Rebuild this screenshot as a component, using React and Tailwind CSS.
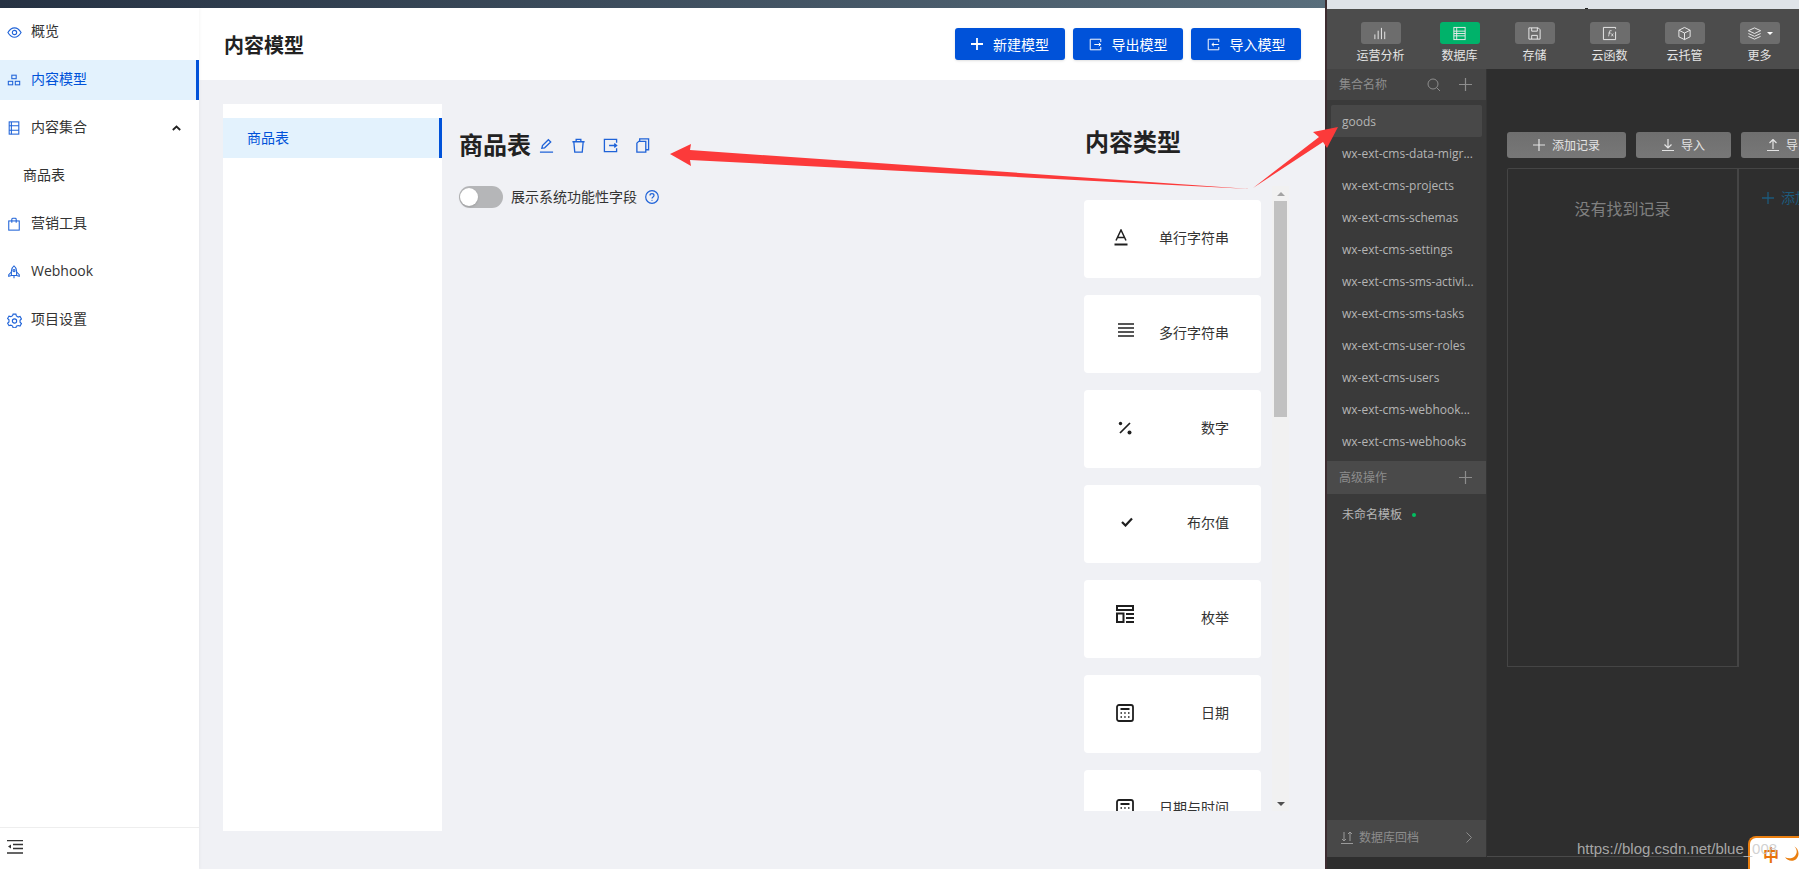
import React from "react";

const font = { fontFamily: '"Open Sans","Noto Sans CJK SC",sans-serif' };

function Svg({ s = 14, v = 16, sw = 1.2, children, className = "" }) {
  return (
    <svg width={s} height={s} viewBox={`0 0 ${v} ${v}`} fill="none" stroke="currentColor" strokeWidth={sw} className={"shrink-0 " + className}>
      {children}
    </svg>
  );
}

const EyeI = () => (
  <Svg s={15}>
    <path d="M1 8c2-3.400 4.300-5 7-5s5 1.600 7 5c-2 3.400-4.300 5-7 5s-5-1.600-7-5z" />
    <circle cx="8" cy="8" r="2.300" />
  </Svg>
);
const ModelI = () => (
  <Svg>
    <rect x="5.500" y="2.500" width="5" height="4" />
    <rect x="1.500" y="9.500" width="5" height="4" />
    <rect x="9.500" y="9.500" width="5" height="4" />
  </Svg>
);
const SetI = () => (
  <Svg>
    <rect x="2.500" y="1" width="11" height="14" />
    <path d="M2.500 5.500h11M2.500 10.500h11M5 1v14" />
  </Svg>
);
const BagI = () => (
  <Svg>
    <rect x="2" y="4.500" width="12" height="10.500" />
    <path d="M5.500 6.500V2.500a1 1 0 0 1 1-1h3a1 1 0 0 1 1 1v4" />
  </Svg>
);
const RocketI = () => (
  <Svg>
    <path d="M8 1c2 1.500 3 3.500 3 6v5H5V7c0-2.500 1-4.500 3-6z" />
    <path d="M5 8l-3 3v2l3-1M11 8l3 3v2l-3-1M8 12v3" />
    <circle cx="8" cy="6.500" r="1.200" />
  </Svg>
);
const GearI = () => (
  <Svg s={15}>
    <path d="M6.500 1.200h3l.5 2 1.900 1.100 2-.6 1.500 2.600-1.500 1.400v2.200l1.500 1.400-1.500 2.600-2-.6L10 14l-.5 1.800h-3L6 14l-1.900-1.100-2 .6L.6 10.900l1.500-1.400V7.300L.6 5.900l1.500-2.600 2 .6L6 2.800z" />
    <circle cx="8" cy="8.500" r="2.300" />
  </Svg>
);
const ExportI = ({ s = 14, sw = 1.2 }) => (
  <Svg s={s} sw={sw}>
    <path d="M14.500 5V1.500h-13v13h13V11" />
    <path d="M6.500 8h8M12 6l2.500 2-2.500 2" />
  </Svg>
);
const ImportI = ({ s = 14 }) => (
  <Svg s={s}>
    <path d="M14.500 5V1.500h-13v13h13V11" />
    <path d="M6 8h8.500M8.500 6L6 8l2.500 2" />
  </Svg>
);

function NavItem({ icon, label, active, right, sub }) {
  return (
    <div className="h-12 flex items-center">
      <div className={`h-10 w-full flex items-center text-[14px] ${active ? "bg-[#e3f2fd] border-r-[3px] border-[#0052d9] text-[#0052d9]" : "text-[#333333]"} ${sub ? "pl-[23px]" : "pl-[7px]"}`}>
        {icon && <span className="w-[24px] text-[#1f63d8]">{icon}</span>}
        <span className="mb-[3px]">{label}</span>
        {right}
      </div>
    </div>
  );
}

function BlueBtn({ icon, label }) {
  return (
    <button className="w-[110px] h-8 rounded-[3px] bg-[#0052d9] text-white text-[14px] flex items-center justify-center gap-[10px] shadow-sm">
      {icon}
      <span>{label}</span>
    </button>
  );
}

const LinesI = () => (
  <svg width="17" height="15" viewBox="0 0 17 15" stroke="#1f1f1f" strokeWidth="1.700" className="ml-[2px] mt-[-8px]">
    <path d="M0 1h16M0 5h16M0 9h16M0 13h16" />
  </svg>
);
const AI = () => (
  <svg width="14" height="18" viewBox="0 0 14 18" fill="none" stroke="#1f1f1f" strokeWidth="1.500" className="mt-[-3px] ml-[-2px]">
    <path d="M2 11.500L7 1l5 10.500M3.500 8.500h7" />
    <path d="M0.500 15.500h13" strokeWidth="2" />
  </svg>
);
const PctI = () => (
  <svg width="14" height="14" viewBox="0 0 14 14" stroke="#1f1f1f" strokeWidth="1.700" className="ml-[2px] mt-[-2px]">
    <path d="M2 12L12 2" />
    <circle cx="2.500" cy="2.500" r="1.700" fill="#1f1f1f" stroke="none" />
    <circle cx="11.500" cy="11.500" r="2" fill="#1f1f1f" stroke="none" />
  </svg>
);
const CheckI = () => (
  <svg width="12" height="10" viewBox="0 0 12 10" fill="none" stroke="#1f1f1f" strokeWidth="2.200" className="ml-[5px] mt-[-5px]">
    <path d="M1 5l3.500 3.500L11 1.500" />
  </svg>
);
const EnumI = () => (
  <svg width="18" height="18" viewBox="0 0 18 18" fill="none" stroke="#1f1f1f" strokeWidth="2" className="mt-[-10px]">
    <path d="M1 1h16v4H1zM1 8.500h6.500V17H1zM10 9h8M10 13h8M10 17h8" />
  </svg>
);
const CalI = () => (
  <svg width="18" height="18" viewBox="0 0 18 18" fill="none" stroke="#1f1f1f" strokeWidth="1.800" className="mt-[-2px]">
    <rect x="1" y="1" width="16" height="16" rx="2" />
    <path d="M4.500 5h9" strokeWidth="2" />
    <path d="M4.500 9h1.500M8.200 9h1.500M12 9h1.500M4.500 13h1.500M8.200 13h1.500M12 13h1.500" strokeWidth="1.700" />
  </svg>
);

const types = [
  [<AI />, "单行字符串"],
  [<LinesI />, "多行字符串"],
  [<PctI />, "数字"],
  [<CheckI />, "布尔值"],
  [<EnumI />, "枚举"],
  [<CalI />, "日期"],
  [<CalI />, "日期与时间"],
];

const tabs = [
  ["运营分析", <path key="a" d="M2 14V9M5.500 14V5M9 14V2M12.500 14V6" />, false],
  ["数据库", <g key="b"><rect x="2" y="1.500" width="12" height="13" /><path d="M2 5.500h12M2 8h12M2 10.500h12M5 1.500v13" /></g>, true],
  ["存储", <g key="c"><path d="M2 2h10l2 2v10H2z" /><path d="M5 2v3.500h6V2M5 14v-4h6v4" /></g>, false],
  ["云函数", <g key="d"><path d="M14.500 3V1.500h-13v13h13V6" /><path d="M7 11l1.300-6h2M6.800 7.500h2.500M10 8l2 3M12 8l-2 3" strokeWidth=".8" /></g>, false],
  ["云托管", <g key="e"><path d="M8 1.500l6 3v7l-6 3-6-3v-7z" /><path d="M2 4.500l6 3 6-3M8 7.500v7" /></g>, false],
];

const cols = ["wx-ext-cms-data-migr...", "wx-ext-cms-projects", "wx-ext-cms-schemas", "wx-ext-cms-settings", "wx-ext-cms-sms-activi...", "wx-ext-cms-sms-tasks", "wx-ext-cms-user-roles", "wx-ext-cms-users", "wx-ext-cms-webhook...", "wx-ext-cms-webhooks"];

function DarkBtn({ w, icon, label }) {
  return (
    <button className={`${w} h-[26px] shrink-0 rounded-[3px] bg-gradient-to-b from-[#6f6f6f] to-[#777777] text-[#e4e4e4] text-[12px] flex items-center justify-center gap-[7px]`}>
      {icon}
      <span className="pt-[1px]">{label}</span>
    </button>
  );
}

export default function App() {
  return (
    <div className="relative w-[1799px] h-[869px] overflow-hidden flex bg-[#f0f1f5]" style={font}>
      {/* left window */}
      <div className="w-[1325px] h-full flex flex-col shrink-0">
        <div className="h-2 bg-gradient-to-r from-[#263243] to-[#596e7c]" />
        <div className="flex-1 flex min-h-0">
          <aside className="w-[199px] bg-white flex flex-col shrink-0 shadow-[1px_0_3px_rgba(0,0,0,0.04)] z-10">
            <div className="flex-1">
              <NavItem icon={<EyeI />} label="概览" />
              <NavItem icon={<ModelI />} label="内容模型" active />
              <NavItem
                icon={<SetI />}
                label="内容集合"
                right={
                  <svg width="9" height="6" viewBox="0 0 9 6" fill="none" stroke="#222" strokeWidth="1.800" className="ml-[85px]">
                    <path d="M.8 5l3.700-3.500L8.200 5" />
                  </svg>
                }
              />
              <NavItem label="商品表" sub />
              <NavItem icon={<BagI />} label="营销工具" />
              <NavItem icon={<RocketI />} label="Webhook" />
              <NavItem icon={<GearI />} label="项目设置" />
            </div>
            <div className="h-[42px] border-t border-[#eeeeee] pl-[7px] pt-[12px]">
              <svg width="16" height="14" viewBox="0 0 16 14" fill="none" stroke="#333" strokeWidth="1.300">
                <path d="M0 .7h16M6 4.500h10M6 8.500h10M0 13h16" />
                <path d="M4 4.500v4L1 6.500z" fill="#333" stroke="none" />
              </svg>
            </div>
          </aside>
          <div className="flex-1 flex flex-col min-w-0">
            <header className="h-[72px] bg-white flex items-center justify-between pl-[25px] pr-6 shrink-0">
              <h1 className="text-[20px] font-bold text-[#222222] pt-[3px]">内容模型</h1>
              <div className="flex gap-2">
                <BlueBtn
                  icon={
                    <svg width="12" height="12" viewBox="0 0 12 12" stroke="white" strokeWidth="1.800">
                      <path d="M6 0v12M0 6h12" />
                    </svg>
                  }
                  label="新建模型"
                />
                <BlueBtn icon={<ExportI s={13} />} label="导出模型" />
                <BlueBtn icon={<ImportI s={13} />} label="导入模型" />
              </div>
            </header>
            <main className="flex-1 flex pl-6 pt-6 min-h-0">
              <div className="w-[219px] h-[727px] bg-white pt-[14px] shrink-0">
                <div className="h-10 bg-[#e3f2fd] border-r-[3px] border-[#0052d9] flex items-center pl-6 pb-[2px] text-[14px] text-[#0052d9]">商品表</div>
              </div>
              <div className="w-[642px] pl-[17px] pt-[25px] shrink-0">
                <div className="h-8 flex items-center text-[#1f63d8]">
                  <h2 className="text-[24px] font-bold text-[#222222] w-[80px]">商品表</h2>
                  <div className="flex gap-[17px] items-center">
                    <Svg s={15} sw={1.400}>
                      <path d="M3 11l.7-3L10 1.800 12.500 4.300 6 10.500zM1 15h14" />
                    </Svg>
                    <Svg s={15} sw={1.400}>
                      <path d="M1.500 4h13M5.500 3.500V1.500h5v2M3 4l1 11h8l1-11" />
                    </Svg>
                    <ExportI s={15} sw={1.400} />
                    <Svg s={15} sw={1.400}>
                      <path d="M5 3.500V1h9.500v11.500H12M2 5.500L4 3.500h7.500V15H2z" />
                    </Svg>
                  </div>
                </div>
                <div className="mt-[25px] h-[22px] flex items-center text-[14px] text-[#333333]">
                  <span className="w-11 h-[22px] rounded-full bg-[#b5b6b8] relative shrink-0">
                    <span className="absolute left-[1px] top-[2px] w-[18px] h-[18px] rounded-full bg-white shadow" />
                  </span>
                  <span className="ml-2 mb-[2px]">展示系统功能性字段</span>
                  <span className="ml-2 text-[#1f63d8]">
                    <svg width="14" height="14" viewBox="0 0 14 14" fill="none" stroke="currentColor" strokeWidth="1.200">
                      <circle cx="7" cy="7" r="6.300" />
                      <path d="M5 5.500C5 4.300 6 3.700 7 3.700s2 .7 2 1.800c0 1.500-2 1.500-2 3" />
                      <circle cx="7" cy="10.300" r=".6" fill="currentColor" stroke="none" />
                    </svg>
                  </span>
                </div>
              </div>
              <div className="w-[205px] shrink-0 pt-[22px]">
                <h2 className="h-8 text-[24px] leading-8 font-bold text-[#222222] pl-[1px]">内容类型</h2>
                <div className="mt-[28px] h-[625px] flex">
                  <div className="w-[177px] h-full overflow-hidden pt-[14px] flex flex-col gap-[17px] shrink-0">
                    {types.map(([ic, t], i) => (
                      <div key={i} className="h-[78px] shrink-0 bg-white rounded-[4px] flex items-center justify-between pl-[32px] pr-[32px]">
                        <div className="w-[20px] flex">{ic}</div>
                        <span className="text-[14px] text-[#333333] mb-[3px]">{t}</span>
                      </div>
                    ))}
                  </div>
                  <div className="ml-[11px] w-[17px] h-full bg-[#f1f1f1] flex flex-col items-center">
                    <div className="mt-[6px] w-0 h-0 border-x-[4px] border-x-transparent border-b-[4px] border-b-[#a3a3a3]" />
                    <div className="mt-[5px] w-[13px] h-[216px] bg-[#c1c1c1]" />
                    <div className="mt-auto mb-[5px] w-0 h-0 border-x-[4px] border-x-transparent border-t-[4px] border-t-[#505050]" />
                  </div>
                </div>
              </div>
            </main>
          </div>
        </div>
      </div>

      {/* devtools window */}
      <div className="flex-1 h-full flex flex-col border-l-2 border-[#3d2c30] bg-[#2e2e2e] min-w-0">
        <div className="h-[9px] bg-[#dfe3e8] shrink-0 pl-[258px]">
          <div className="w-[3px] h-[1px] mt-[8px] bg-[#222]" />
        </div>
        <div className="h-[60px] bg-[#4c4c4c] flex pl-[16px] pt-[13px] shrink-0">
          {tabs.map(([label, path, act], i) => (
            <div key={label} className={`w-[75px] flex flex-col items-center ${i === 1 ? "ml-[4px]" : ""}`}>
              <div className={`w-10 h-[22px] rounded-[3px] flex items-center justify-center text-[#ededed] ${act ? "bg-[#00b26a]" : "bg-[#6d6d6d]"}`}>
                <Svg s={15} sw={1}>{path}</Svg>
              </div>
              <span className="mt-[4px] text-[12px] leading-4 text-[#e4e4e4]">{label}</span>
            </div>
          ))}
          <div className="w-[75px] flex flex-col items-center">
            <div className="w-10 h-[22px] rounded-[3px] bg-[#6d6d6d] flex items-center justify-center gap-[5px] text-[#ededed]">
              <Svg s={15} sw={1}>
                <path d="M8 2l6.500 3L8 8 1.500 5zM1.500 8L8 11l6.500-3M1.500 11L8 14l6.500-3" />
              </Svg>
              <span className="w-0 h-0 border-x-[3px] border-x-transparent border-t-[3px] border-t-white" />
            </div>
            <span className="mt-[4px] text-[12px] leading-4 text-[#e4e4e4]">更多</span>
          </div>
        </div>
        <div className="h-[788px] flex shrink-0">
          <div className="w-[160px] h-full bg-[#3a3a3a] flex flex-col border-r border-[#343434] shrink-0">
            <div className="h-[31px] bg-[#444444] flex items-center pl-[12px] pr-[14px] text-[12px] text-[#8d8d8d] shrink-0">
              <span className="flex-1 pt-[1px]">集合名称</span>
              <svg width="14" height="14" viewBox="0 0 14 14" fill="none" stroke="#8d8d8d" strokeWidth="1">
                <circle cx="6" cy="6" r="5" />
                <path d="M9.500 9.500l3.500 3.500" />
              </svg>
              <svg width="13" height="13" viewBox="0 0 13 13" stroke="#8d8d8d" strokeWidth="1.200" className="ml-[18px]">
                <path d="M6.500 0v13M0 6.500h13" />
              </svg>
            </div>
            <div className="pt-[5px] px-1 text-[12px] text-[#b5b5b5] shrink-0">
              <div className="h-8 bg-[#484848] rounded-[2px] flex items-center pl-[11px] pt-[1px]">goods</div>
              {cols.map((c) => (
                <div key={c} className="h-8 flex items-center pl-[11px] pt-[1px] whitespace-nowrap">{c}</div>
              ))}
            </div>
            <div className="mt-1 h-[33px] bg-[#4a4a4a] flex items-center pl-[12px] pr-[14px] text-[12px] text-[#8d8d8d] shrink-0">
              <span className="flex-1">高级操作</span>
              <svg width="13" height="13" viewBox="0 0 13 13" stroke="#8d8d8d" strokeWidth="1.200">
                <path d="M6.500 0v13M0 6.500h13" />
              </svg>
            </div>
            <div className="h-10 flex items-center pl-[15px] pt-[1px] text-[12px] text-[#b5b5b5] shrink-0">
              未命名模板
              <span className="ml-[10px] w-[4px] h-[4px] rounded-full bg-[#00c060]" />
            </div>
            <div className="flex-1" />
            <div className="h-[37px] bg-[#484848] flex items-center pl-[14px] pr-[14px] text-[12px] text-[#8d8d8d] shrink-0">
              <svg width="12" height="12" viewBox="0 0 12 12" fill="none" stroke="#9a9a9a" strokeWidth="1" className="mr-[6px] mb-[2px]">
                <path d="M3 0v9M1 7l2 2 2-2M9 9V0M7 2l2-2 2 2M0 11.500h12" />
              </svg>
              <span className="flex-1 mb-[2px]">数据库回档</span>
              <svg width="6" height="11" viewBox="0 0 6 11" fill="none" stroke="#8d8d8d" strokeWidth="1" className="mb-[2px]">
                <path d="M.5.500l5 5-5 5" />
              </svg>
            </div>
          </div>
          <div className="flex-1 min-w-0 h-full border-b border-[#4a4a4a] pl-[20px] pt-[63px] overflow-hidden">
            <div className="flex gap-[10px] w-[340px]">
              <DarkBtn
                w="w-[119px]"
                icon={
                  <svg width="12" height="12" viewBox="0 0 12 12" stroke="#e4e4e4" strokeWidth="1.200">
                    <path d="M6 0v12M0 6h12" />
                  </svg>
                }
                label="添加记录"
              />
              <DarkBtn
                w="w-[95px]"
                icon={
                  <svg width="12" height="12" viewBox="0 0 12 12" fill="none" stroke="#e4e4e4" strokeWidth="1.200">
                    <path d="M6 0v8.500M2.500 5.500L6 9l3.500-3.500M0 11.500h12" />
                  </svg>
                }
                label="导入"
              />
              <DarkBtn
                w="w-[95px]"
                icon={
                  <svg width="12" height="12" viewBox="0 0 12 12" fill="none" stroke="#e4e4e4" strokeWidth="1.200">
                    <path d="M6 10V1M2.500 4L6 .5 9.500 4M0 11.500h12" />
                  </svg>
                }
                label="导出"
              />
            </div>
            <div className="mt-[10px] h-[499px] flex w-[340px]">
              <div className="w-[232px] h-full border border-[#454545] border-r-2 rounded-tl-[2px] flex justify-center pt-[28px] text-[16px] text-[#808080] shrink-0">
                没有找到记录
              </div>
              <div className="flex-1 border-t border-[#454545] pl-[23px] pt-[18px] flex items-start gap-[7px] text-[14px] text-[#1d5a7c] whitespace-nowrap">
                <svg width="12" height="12" viewBox="0 0 12 12" stroke="#1d5a7c" strokeWidth="1.300" className="mt-[5px]">
                  <path d="M6 0v12M0 6h12" />
                </svg>
                添加字段
              </div>
            </div>
          </div>
        </div>
      </div>

      {/* annotation arrows over the screenshot */}
      <svg width="1799" height="869" viewBox="0 0 1799 869" className="absolute inset-0 pointer-events-none">
        <polygon points="670,154 691,144 690,150 1250,189 690,160 691,166" fill="#fc3a3a" />
        <polygon points="1253,188 1319,137 1313,132 1338,127 1327,148 1323,142" fill="#fc3a3a" />
      </svg>

      <div className="absolute right-0 bottom-0 w-[51px] h-[33px] bg-white border-2 border-b-0 border-r-0 border-[#ea7f10] rounded-tl-[8px] flex items-center pl-[13px] gap-[6px] text-[16px] text-[#e8730c]" style={{ fontFamily: '"Noto Sans CJK SC",sans-serif' }}>
        <span className="font-bold">中</span>
        <svg width="14" height="15" viewBox="0 0 13 14" fill="#ea7f10" className="shrink-0">
          <path d="M8 0c3 2 4 6 1.500 9S3 12 0 10.500C2 13.500 6.500 15 10 12.500 13.500 10 14 3 8 0z" />
        </svg>
      </div>
      <div className="absolute left-[1577px] top-[839px] text-[15px] leading-5 text-[#c6c6c6]/80 whitespace-nowrap" style={{ fontFamily: '"Liberation Sans",sans-serif' }}>
        https://blog.csdn.net/blue_008
      </div>
    </div>
  );
}
